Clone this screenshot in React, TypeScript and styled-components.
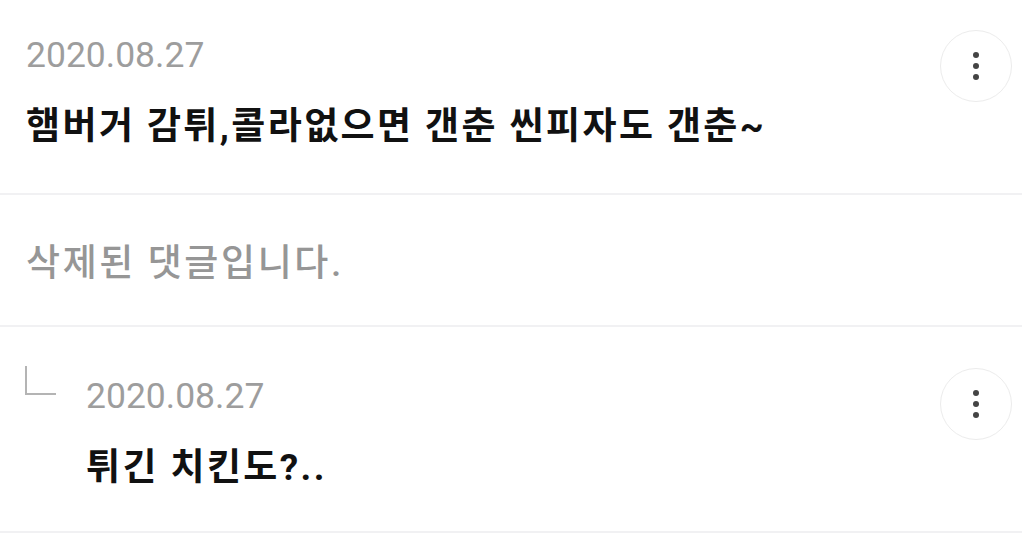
import styled, { createGlobalStyle } from 'styled-components';

type TComment = {
  id: number;
  date?: string;
  text: string;
  deleted?: boolean;
  reply?: boolean;
};

const comments: TComment[] = [
  { id: 1, date: '2020.08.27', text: '햄버거 감튀,콜라없으면 갠춘 씬피자도 갠춘~' },
  { id: 2, text: '삭제된 댓글입니다.', deleted: true },
  { id: 3, date: '2020.08.27', text: '튀긴 치킨도?..', reply: true }
];

const GlobalStyle = createGlobalStyle`
  html, body {
    margin: 0;
    padding: 0;
    background: #ffffff;
  }
  body {
    font-family: Roboto, "Noto Sans CJK KR", sans-serif;
  }
`;

export default function App() {
  return (
    <>
      <GlobalStyle />
      <List>
        {comments.map((c) =>
          c.deleted ? (
            <DeletedRow key={c.id}>
              <DeletedText>{c.text}</DeletedText>
            </DeletedRow>
          ) : (
            <Row key={c.id} $reply={c.reply}>
              {c.reply && (
                <ReplyMark>
                  <svg width="34" height="32" viewBox="0 0 34 32">
                    <path d="M2 1 V29 H32" fill="none" stroke="#b4b4b4" strokeWidth="2" />
                  </svg>
                </ReplyMark>
              )}
              <Body $reply={c.reply}>
                <DateText>{c.date}</DateText>
                <CommentText>{c.text}</CommentText>
              </Body>
              <MoreButton aria-label="more">
                <Dot />
                <Dot />
                <Dot />
              </MoreButton>
            </Row>
          )
        )}
      </List>
    </>
  );
}

const List = styled.div`
  width: 1022px;
  display: flex;
  flex-direction: column;
`;

const Row = styled.div<{ $reply?: boolean }>`
  display: flex;
  align-items: flex-start;
  padding: ${({ $reply }) => ($reply ? '41px 10px 0 24px' : '30px 10px 0 26px')};
  height: ${({ $reply }) => ($reply ? '206px' : '195px')};
  box-sizing: border-box;
  border-bottom: 2px solid #f1f1f3;
`;

const DeletedRow = styled.div`
  display: flex;
  align-items: center;
  height: 132px;
  box-sizing: border-box;
  padding: 8px 26px 0;
  border-bottom: 2px solid #f1f1f3;
`;

const ReplyMark = styled.div`
  width: 62px;
  flex: 0 0 62px;
  margin-top: -3px;
`;

const Body = styled.div<{ $reply?: boolean }>`
  flex: 1;
  display: flex;
  flex-direction: column;
  padding-top: ${({ $reply }) => ($reply ? '7px' : '4px')};
`;

const DateText = styled.span`
  font-size: 35.5px;
  line-height: 42px;
  color: #9d9d9d;
`;

const CommentText = styled.p`
  margin: 27px 0 0;
  font-size: 37px;
  line-height: 48px;
  font-weight: 700;
  letter-spacing: 2.4px;
  color: #111111;
`;

const DeletedText = styled.span`
  font-size: 37px;
  line-height: 48px;
  font-weight: 500;
  letter-spacing: 2.6px;
  color: #969696;
`;

const MoreButton = styled.button`
  flex: 0 0 72px;
  width: 72px;
  height: 72px;
  border-radius: 50%;
  border: 1px solid #ececec;
  background: #ffffff;
  padding: 0;
  display: flex;
  flex-direction: column;
  align-items: center;
  justify-content: center;
  gap: 5px;
`;

const Dot = styled.span`
  width: 6px;
  height: 6px;
  border-radius: 50%;
  background: #444444;
`;
